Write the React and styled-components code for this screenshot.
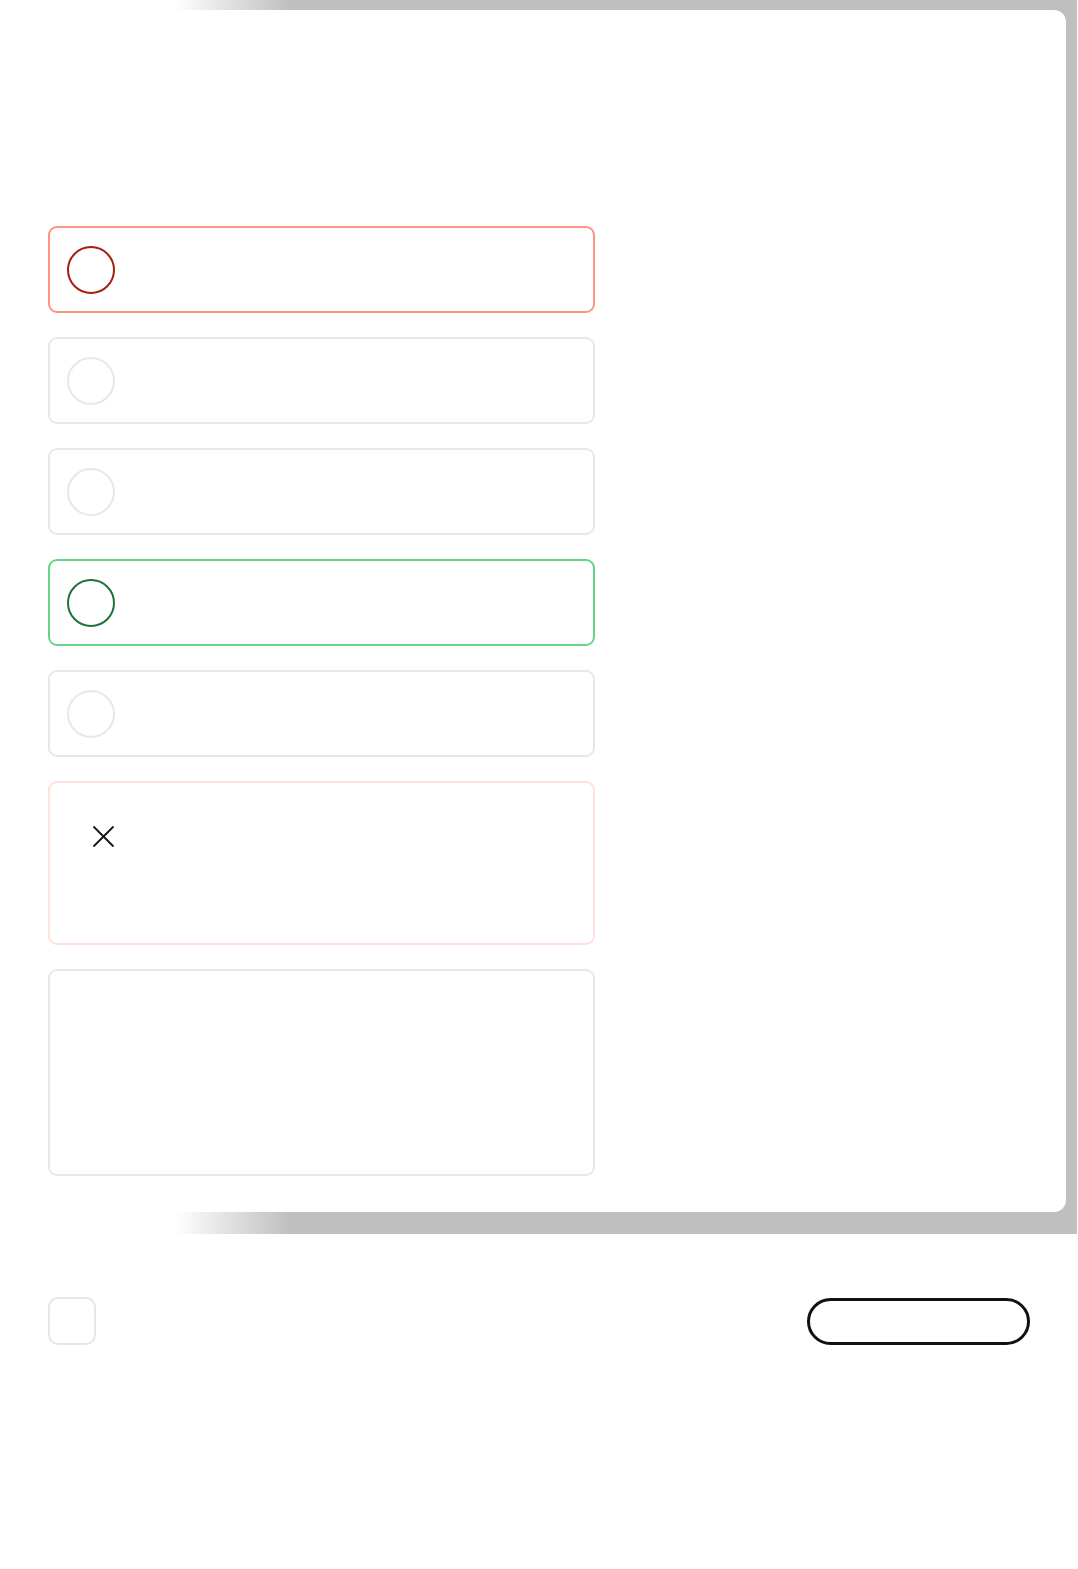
import React from 'react';
import styled, { createGlobalStyle } from 'styled-components';

const GlobalStyle = createGlobalStyle`
  html, body {
    margin: 0;
    padding: 0;
    background: #ffffff;
    font-family: "Inter", "Liberation Sans", sans-serif;
  }
`

const Stage = styled.div`
  width: 1077px;
  box-sizing: border-box;
  padding: 10px 11px 22px 0;
  background: linear-gradient(to right, #ffffff 175px, #bfbfbf 290px);
`
const Card = styled.div`
  background: #ffffff;
  border-radius: 12px;
  padding: 216px 0 36px 48px;
  display: flex;
  flex-direction: column;
  gap: 24px;
`
const Option = styled.div`
  width: 547px;
  height: 87px;
  box-sizing: border-box;
  display: flex;
  align-items: center;
  padding: 0 17px;
  border: 2px solid ${p => p.$border};
  border-radius: 9px;
  background: #ffffff;
`
const Radio = styled.span`
  width: 48px;
  height: 48px;
  box-sizing: border-box;
  border-radius: 50%;
  border: 2px solid ${p => p.$ring};
`
const Feedback = styled.div`
  width: 547px;
  height: 164px;
  box-sizing: border-box;
  padding: 43px;
  border: 2px solid #ffe1dd;
  border-radius: 9px;
`
const Notes = styled.div`
  width: 547px;
  height: 207px;
  box-sizing: border-box;
  border: 2px solid #e8e8e8;
  border-radius: 9px;
`
const Footer = styled.div`
  display: flex;
  justify-content: space-between;
  align-items: center;
  padding: 63px 48px 0;
`
const Check = styled.div`
  width: 48px;
  height: 48px;
  box-sizing: border-box;
  border: 2px solid #e6e6e6;
  border-radius: 10px;
`
const Pill = styled.button`
  width: 223px;
  height: 47px;
  box-sizing: border-box;
  border: 3px solid #111111;
  border-radius: 999px;
  background: #ffffff;
  padding: 0;
`

const options = [
  { border: '#ff9384', ring: '#a6200f' },
  { border: '#e8e8e8', ring: '#e8e8e8' },
  { border: '#e8e8e8', ring: '#e8e8e8' },
  { border: '#65d484', ring: '#22703a' },
  { border: '#e8e8e8', ring: '#e8e8e8' },
];

export default function App() {
  return (
    <>
      <GlobalStyle />
      <Stage>
        <Card>
          {options.map((o, i) => (
            <Option key={i} $border={o.border}>
              <Radio $ring={o.ring} />
            </Option>
          ))}
          <Feedback>
            <svg width="21" height="21" viewBox="0 0 21 21" style={{ display: 'block' }}>
              <path d="M1 1L20 20M20 1L1 20" stroke="#141414" strokeWidth="1.8" strokeLinecap="round" fill="none" />
            </svg>
          </Feedback>
          <Notes />
        </Card>
      </Stage>
      <Footer>
        <Check />
        <Pill />
      </Footer>
    </>
  );
}
